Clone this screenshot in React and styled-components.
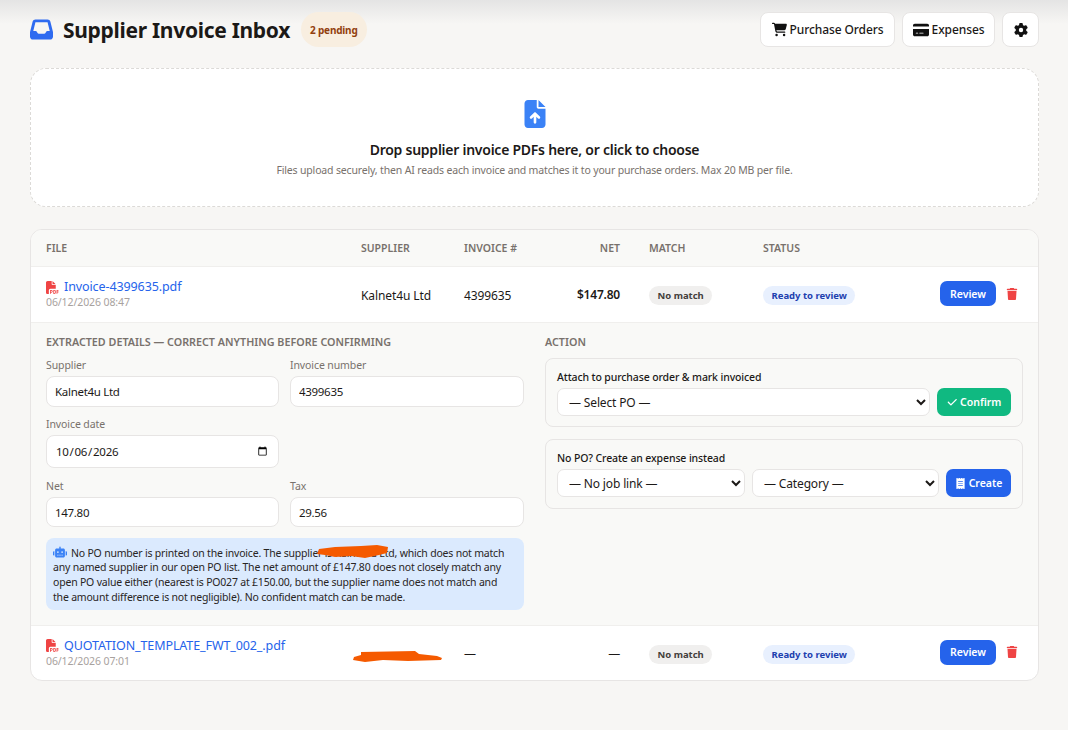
import React from 'react';
import styled, { createGlobalStyle } from 'styled-components';
import {
  FaInbox,
  FaCartShopping,
  FaCreditCard,
  FaGear,
  FaFileArrowUp,
  FaFilePdf,
  FaTrash,
  FaRobot,
  FaCheck,
  FaReceipt,
} from 'react-icons/fa6';

const GlobalStyle = createGlobalStyle`
  * { box-sizing: border-box; }
  html, body { margin: 0; padding: 0; }
  body {
    min-height: 730px;
    background: linear-gradient(#e4e4e4, #f7f6f4 24px) no-repeat #f7f6f4;
    color: #1c1917;
    font-family: "Noto Sans", "Open Sans", sans-serif;
    font-size: 13px;
  }
`;

const Page = styled.div`
  padding: 12px 29px 0 30px;
`;

const Header = styled.header`
  display: flex;
  align-items: center;
  justify-content: space-between;
  margin-bottom: 21px;
`;

const TitleGroup = styled.div`
  display: flex;
  align-items: center;
`;

const Title = styled.h1`
  margin: 0 11px 0 10px;
  font-size: 21px;
  font-weight: 700;
  letter-spacing: -0.3px;
`;

const InboxIcon = styled(FaInbox)`
  color: #2f6bf0;
  font-size: 23px;
`;

const PendingBadge = styled.span`
  display: flex;
  align-items: center;
  height: 35px;
  padding: 0 9px;
  border-radius: 18px;
  background: #f8eee0;
  color: #92400e;
  font-size: 10px;
  font-weight: 700;
  letter-spacing: -0.2px;
`;

const HeaderActions = styled.div`
  display: flex;
  gap: 7px;
`;

const GhostButton = styled.button`
  display: flex;
  align-items: center;
  justify-content: center;
  gap: 3px;
  height: 35px;
  width: ${p => p.$width}px;
  padding: 0;
  background: #fff;
  border: 1px solid #e7e5e4;
  border-radius: 8px;
  color: #1c1917;
  font: inherit;
  font-size: 12px;
  font-weight: 500;
  letter-spacing: -0.1px;
  svg { font-size: ${p => p.$icon}px; color: #111; }
`;

const DropZone = styled.div`
  height: 139px;
  margin-bottom: 22px;
  display: flex;
  flex-direction: column;
  align-items: center;
  background: #fff;
  border: 1px dashed #dcdad7;
  border-radius: 16px;
  padding-top: 31px;
`;

const UploadIcon = styled(FaFileArrowUp)`
  color: #3b82f6;
  font-size: 28px;
  flex: none;
`;

const DropTitle = styled.div`
  margin-top: 12px;
  font-size: 14px;
  line-height: 20px;
  font-weight: 600;
  letter-spacing: -0.25px;
`;

const DropHint = styled.div`
  margin-top: 3px;
  font-size: 10.5px;
  line-height: 15px;
  letter-spacing: -0.16px;
  color: #78716c;
`;

const TableCard = styled.section`
  background: #fff;
  border: 1px solid #e7e5e4;
  border-radius: 12px;
  overflow: hidden;
`;

const Row = styled.div`
  display: grid;
  grid-template-columns: 315px 103px 86px 84px 129px 177px 1fr;
  align-items: center;
  padding-left: 15px;
  & > * { min-width: 0; }
`;

const HeadRow = styled(Row)`
  height: 37px;
  background: #f9f9f7;
  border-bottom: 1px solid #f0efed;
  color: #78716c;
  font-size: 10.5px;
  font-weight: 600;
  text-transform: uppercase;
`;

const FileRow = styled(Row)`
  height: ${p => p.$height}px;
`;

const NetCell = styled.div`
  text-align: right;
  padding-right: 14px;
  font-weight: ${p => (p.$bold ? 600 : 'inherit')};
`;

const AmountCell = styled(NetCell)`
  font-size: 12px;
  letter-spacing: -0.2px;
`;

const MatchCell = styled.div`
  padding-left: 15px;
`;

const FileCell = styled.div`
  padding-bottom: 2px;
`;

const FileName = styled.a`
  display: flex;
  align-items: center;
  gap: 5px;
  color: #2563eb;
  font-size: 12.5px;
  line-height: 18px;
  letter-spacing: -0.1px;
  text-decoration: none;
  svg { color: #ef4444; font-size: 13px; }
`;

const FileDate = styled.div`
  color: #a8a29e;
  font-size: 10.5px;
  line-height: 13px;
  letter-spacing: -0.1px;
`;

const TextCell = styled.div`
  font-size: 12px;
  letter-spacing: -0.1px;
  padding-top: 1px;
`;

const Pill = styled.span`
  display: inline-block;
  padding: 0 8.5px;
  height: 19px;
  line-height: 19px;
  margin-top: 2px;
  border-radius: 10px;
  font-size: 9.5px;
  font-weight: 700;
  background: ${p => (p.$blue ? '#e8f0fe' : '#f0efee')};
  color: ${p => (p.$blue ? '#1e40af' : '#44403c')};
`;

const RowActions = styled.div`
  display: flex;
  align-items: center;
  gap: 10px;
  padding-bottom: 2px;
`;

const SolidButton = styled.button`
  display: flex;
  align-items: center;
  justify-content: center;
  gap: 3px;
  width: ${p => p.$width}px;
  height: ${p => p.$height}px;
  padding: 0;
  flex: none;
  border: 0;
  border-radius: 7px;
  background: ${p => (p.$green ? '#10b981' : '#2563eb')};
  color: #fff;
  font: inherit;
  font-size: 10.5px;
  font-weight: 600;
  svg { font-size: ${p => p.$icon || 11}px; }
`;

const TrashIcon = styled(FaTrash)`
  color: #ef4444;
  font-size: 12px;
`;

const Details = styled.div`
  display: grid;
  grid-template-columns: 478px 478px;
  gap: 21px;
  height: 304px;
  padding: 11px 15px 0;
  background: #f9f9f7;
  border-top: 1px solid #f0efed;
  border-bottom: 1px solid #f0efed;
`;

const SectionTitle = styled.div`
  color: #78716c;
  font-size: 10.75px;
  line-height: 16px;
  font-weight: 600;
  text-transform: uppercase;
  margin-bottom: 8px;
`;

const FormGrid = styled.div`
  display: grid;
  grid-template-columns: 233px 234px;
  column-gap: 11px;
`;

const Field = styled.label`
  display: block;
  margin-bottom: ${p => p.$gap || 10}px;
`;

const FieldLabel = styled.div`
  color: #78716c;
  font-size: 10.5px;
  line-height: 14px;
  letter-spacing: -0.1px;
  margin-bottom: 4px;
`;

const Input = styled.input`
  display: block;
  width: 100%;
  height: ${p => p.$height || 31}px;
  padding: 0 8px;
  background: #fff;
  border: 1px solid #e7e5e4;
  border-radius: 8px;
  color: #1c1917;
  font: inherit;
  font-size: 11.5px;
  letter-spacing: -0.3px;
  outline: none;
`;

const Note = styled.div`
  position: relative;
  height: 72px;
  margin-top: 1px;
  padding: 6.5px 12px 6.5px 7px;
  background: #dbeafe;
  border-radius: 8px;
  font-size: 10.5px;
  line-height: 14.7px;
  letter-spacing: -0.2px;
  color: #292524;
`;

const RobotIcon = styled(FaRobot)`
  color: #3b82f6;
  font-size: 14px;
  vertical-align: -2px;
  margin-right: 4px;
`;

const NoteScribble = styled.svg`
  position: absolute;
  left: 271px;
  top: 7px;
`;

const ActionBox = styled.div`
  height: ${p => p.$height}px;
  margin-bottom: 12px;
  padding: 11px 11px 0;
  border: 1px solid #e7e5e4;
  border-radius: 8px;
`;

const BoxTitle = styled.div`
  font-size: 10.5px;
  line-height: 15px;
  font-weight: 500;
  letter-spacing: -0.12px;
  margin-bottom: 3px;
`;

const BoxControls = styled.div`
  display: flex;
  gap: 7px;
`;

const Select = styled.select`
  flex: ${p => (p.$width ? 'none' : 1)};
  width: ${p => (p.$width ? `${p.$width}px` : 'auto')};
  min-width: 0;
  height: 28px;
  padding: 0 7px;
  background: #fff;
  border: 1px solid #e7e5e4;
  border-radius: 7px;
  color: #1c1917;
  font: inherit;
  font-size: 12px;
  letter-spacing: -0.15px;
  outline: none;
`;

const RowScribble = styled.svg`
  display: block;
  margin: 6px 0 0 -8px;
`;

const InvoiceRow = ({ name, date, supplier, number, net, bold }) => (
  <FileRow $height={bold ? 55 : 54}>
    <FileCell>
      <FileName href="#">
        <FaFilePdf />
        {name}
      </FileName>
      <FileDate>{date}</FileDate>
    </FileCell>
    {supplier ? (
      <TextCell>{supplier}</TextCell>
    ) : (
      <RowScribble width="90" height="11" viewBox="0 0 90 11">
        {/* orange marker stroke over the supplier name */}
        <path
          d="M8 1 L62 0 L66 3 L84 5 L89 7 L88 9 L55 10 L30 9 L12 11 L0 9 L1 6 L8 4 Z"
          fill="#f55a00"
        />
      </RowScribble>
    )}
    <TextCell>{number}</TextCell>
    <AmountCell $bold={bold}>{net}</AmountCell>
    <MatchCell>
      <Pill>No match</Pill>
    </MatchCell>
    <div>
      <Pill $blue>Ready to review</Pill>
    </div>
    <RowActions>
      <SolidButton $width={56} $height={25}>Review</SolidButton>
      <TrashIcon />
    </RowActions>
  </FileRow>
);

export default function App() {
  return (
    <Page>
      <GlobalStyle />
      <Header>
        <TitleGroup>
          <InboxIcon />
          <Title>Supplier Invoice Inbox</Title>
          <PendingBadge>2 pending</PendingBadge>
        </TitleGroup>
        <HeaderActions>
          <GhostButton $width={135} $icon={15}><FaCartShopping />Purchase Orders</GhostButton>
          <GhostButton $width={93} $icon={16}><FaCreditCard />Expenses</GhostButton>
          <GhostButton $width={37} $icon={14}><FaGear /></GhostButton>
        </HeaderActions>
      </Header>

      <DropZone>
        <UploadIcon />
        <DropTitle>Drop supplier invoice PDFs here, or click to choose</DropTitle>
        <DropHint>Files upload securely, then AI reads each invoice and matches it to your purchase orders. Max 20 MB per file.</DropHint>
      </DropZone>

      <TableCard>
        <HeadRow>
          <div>File</div>
          <div>Supplier</div>
          <div>Invoice #</div>
          <NetCell>Net</NetCell>
          <MatchCell>Match</MatchCell>
          <div>Status</div>
          <div />
        </HeadRow>

        <InvoiceRow
          name="Invoice-4399635.pdf"
          date="06/12/2026 08:47"
          supplier="Kalnet4u Ltd"
          number="4399635"
          net="$147.80"
          bold
        />

        <Details>
          <div>
            <SectionTitle>Extracted details — correct anything before confirming</SectionTitle>
            <FormGrid>
              <Field>
                <FieldLabel>Supplier</FieldLabel>
                <Input defaultValue="Kalnet4u Ltd" />
              </Field>
              <Field>
                <FieldLabel>Invoice number</FieldLabel>
                <Input defaultValue="4399635" />
              </Field>
              <Field $gap={11}>
                <FieldLabel>Invoice date</FieldLabel>
                <Input type="date" $height={33} defaultValue="2026-10-06" />
              </Field>
              <div />
              <Field>
                <FieldLabel>Net</FieldLabel>
                <Input $height={30} defaultValue="147.80" />
              </Field>
              <Field>
                <FieldLabel>Tax</FieldLabel>
                <Input $height={30} defaultValue="29.56" />
              </Field>
            </FormGrid>
            <Note>
              <RobotIcon />
              No PO number is printed on the invoice. The supplier is Kalnet4u Ltd, which does not match any named supplier in our open PO list. The net amount of £147.80 does not closely match any open PO value either (nearest is PO027 at £150.00, but the supplier name does not match and the amount difference is not negligible). No confident match can be made.
              <NoteScribble width="72" height="13" viewBox="0 0 72 13">
                <path d="M2 4 L18 2 L44 1 L60 0 L71 2 L70 8 L62 10 L48 13 L34 11 L18 12 L8 10 L0 9 Z" fill="#f55a00" />
              </NoteScribble>
            </Note>
          </div>
          <div>
            <SectionTitle>Action</SectionTitle>
            <ActionBox $height={69}>
              <BoxTitle>Attach to purchase order &amp; mark invoiced</BoxTitle>
              <BoxControls>
                <Select>
                  <option>— Select PO —</option>
                </Select>
                <SolidButton $green $width={74} $height={28} $icon={10.5}><FaCheck />Confirm</SolidButton>
              </BoxControls>
            </ActionBox>
            <ActionBox $height={70}>
              <BoxTitle>No PO? Create an expense instead</BoxTitle>
              <BoxControls>
                <Select $width={188}>
                  <option>— No job link —</option>
                </Select>
                <Select $width={187}>
                  <option>— Category —</option>
                </Select>
                <SolidButton $width={65} $height={28} $icon={11}><FaReceipt />Create</SolidButton>
              </BoxControls>
            </ActionBox>
          </div>
        </Details>

        <InvoiceRow
          name="QUOTATION_TEMPLATE_FWT_002_.pdf"
          date="06/12/2026 07:01"
          number="—"
          net="—"
        />
      </TableCard>
    </Page>
  );
}
